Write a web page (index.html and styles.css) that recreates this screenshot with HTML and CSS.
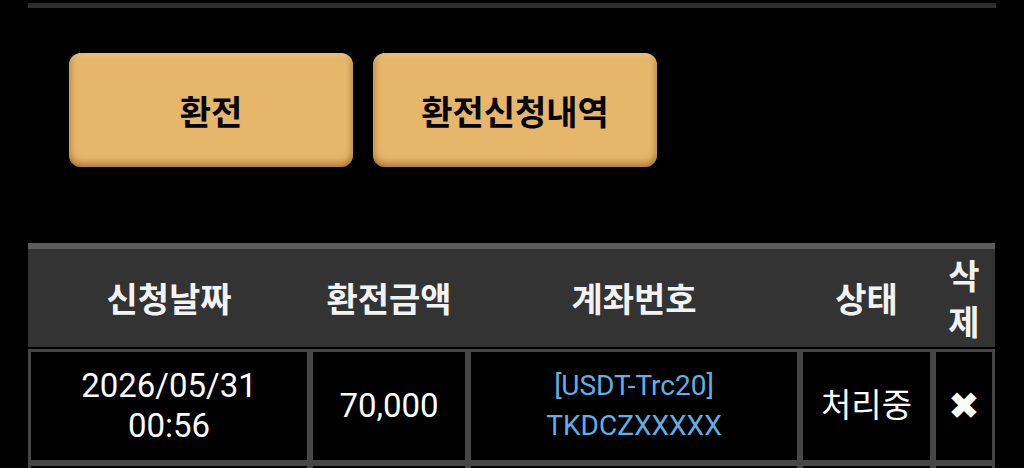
FILE: index.html
```html
<!DOCTYPE html>
<html lang="ko">
<head>
    <meta charset="UTF-8">
    <meta name="viewport" content="width=device-width, initial-scale=1.0">
    <title>환전신청내역</title>
    <link rel="stylesheet" href="styles.css">
</head>
<body>
    <div class="top-line"></div>
    <div class="btn-row">
        <button type="button" class="gold-btn">환전</button>
        <button type="button" class="gold-btn">환전신청내역</button>
    </div>
    <table class="history-table">
        <colgroup>
            <col class="c-date">
            <col class="c-amount">
            <col class="c-account">
            <col class="c-state">
            <col class="c-del">
        </colgroup>
        <thead>
            <tr>
                <th>신청날짜</th>
                <th>환전금액</th>
                <th>계좌번호</th>
                <th>상태</th>
                <th class="th-del">삭제</th>
            </tr>
        </thead>
        <tbody>
            <tr>
                <td>2026/05/31<br>00:56</td>
                <td>70,000</td>
                <td class="account">[USDT-Trc20]<br>TKDCZXXXXX</td>
                <td>처리중</td>
                <td class="del">&#10006;</td>
            </tr>
            <tr>
                <td>2026/05/30<br>21:14</td>
                <td>50,000</td>
                <td class="account">[USDT-Trc20]<br>TKDCZXXXXX</td>
                <td>완료</td>
                <td class="del">&#10006;</td>
            </tr>
        </tbody>
    </table>
</body>
</html>
```

FILE: styles.css
```css
body {
    margin: 0;
    padding: 0;
    background-color: #000;
    color: #fff;
    font-family: Roboto, "Noto Sans CJK KR", sans-serif;
}

.top-line {
    height: 5px;
    margin: 3px 28px 0;
    background-color: #2e2e2e;
}

.btn-row {
    display: flex;
    gap: 20px;
    padding-left: 69px;
    margin-top: 45px;
}

.gold-btn {
    width: 284px;
    height: 114px;
    border: none;
    border-radius: 12px;
    background-color: #e6b66b;
    box-shadow: inset 0 -5px 6px rgba(120, 70, 0, 0.4),
                inset 0 3px 3px rgba(255, 235, 190, 0.35),
                inset 3px 0 4px rgba(120, 70, 0, 0.15),
                inset -3px 0 4px rgba(120, 70, 0, 0.15),
                0 2px 3px rgba(0, 0, 0, 0.6);
    color: #000;
    font-family: "Noto Sans CJK KR", sans-serif;
    font-size: 34px;
    font-weight: bold;
    cursor: pointer;
}

.history-table {
    width: 967px;
    margin: 76px 0 0 28px;
    table-layout: fixed;
    border-collapse: separate;
    border-spacing: 0;
}

.c-date { width: 282px; }
.c-amount { width: 158px; }
.c-account { width: 332px; }
.c-state { width: 133px; }
.c-del { width: 62px; }

.history-table th {
    background-color: #333;
    border-top: 6px solid #5c5c5c;
    border-bottom: 2px solid #000;
    padding: 3px 0;
    color: #f2f2f2;
    font-family: "Noto Sans CJK KR", sans-serif;
    font-size: 34px;
    font-weight: bold;
    line-height: 46px;
    text-align: center;
    vertical-align: middle;
}

.history-table th.th-del {
    padding: 3px 8px;
}

.history-table td {
    border: 3px solid #464646;
    padding: 14px 0;
    font-size: 33px;
    line-height: 40px;
    text-align: center;
    vertical-align: middle;
}

.history-table td.account {
    color: #5eb0e8;
    font-size: 28px;
}

.history-table td.del {
    font-family: "DejaVu Sans", sans-serif;
    font-size: 38px;
}
```
